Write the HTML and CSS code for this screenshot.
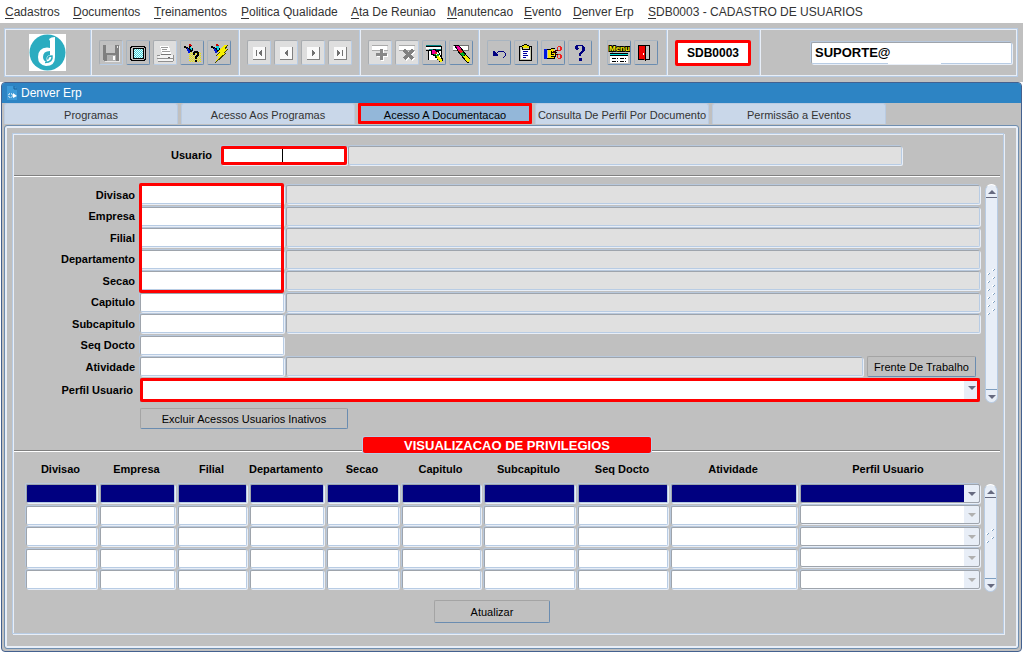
FILE: index.html
```html
<!DOCTYPE html>
<html lang="pt-BR">
<head>
  <meta charset="UTF-8">
  <meta name="viewport" content="width=device-width, initial-scale=1.0">
  <title>SDB0003 - Cadastro de Usuarios</title>
  <link rel="stylesheet" href="styles.css">
</head>
<body>
  <nav class="menu">
    <a href="#"><u>C</u>adastros</a>
    <a href="#"><u>D</u>ocumentos</a>
    <a href="#"><u>T</u>reinamentos</a>
    <a href="#"><u>P</u>olitica Qualidade</a>
    <a href="#"><u>A</u>ta De Reuniao</a>
    <a href="#"><u>M</u>anutencao</a>
    <a href="#"><u>E</u>vento</a>
    <a href="#"><u>D</u>enver Erp</a>
    <a href="#"><u>S</u>DB0003 - CADASTRO DE USUARIOS</a>
  </nav>

  <header class="toolbar">
    <div class="toolbar-frame">
      <div class="group group-logo">
        <svg class="logo" viewBox="0 0 37 37">
          <rect width="37" height="37" fill="#fff"/>
          <circle cx="18.500" cy="18.500" r="18" fill="#2bacc0"/>
          <path d="M20 5Q22 3 26 3V23Q26 32 17 32Q9 31 9 23Q9 14 18 13.500L21 14V7z" fill="#fff"/>
          <path d="M21 17Q14 17 14 23Q14 27 18 28Q16 22 21 21z" fill="#2bacc0"/>
          <path d="M16 28.500Q24 28 23 22Q18 22 19 25.500" fill="none" stroke="#2bacc0" stroke-width="1.500"/>
        </svg>
      </div>

      <div class="group">
        <button class="tool off" aria-label="Salvar">
          <svg viewBox="0 0 22 22"><path d="M3 3h16v16H4v-1H3z" fill="#808080"/><path d="M6 3h9v8H6z" fill="#c4c4c4"/><path d="M7 13h9v6H7z" fill="#b0b0b0"/><path d="M13 14h2v4h-2z" fill="#fff"/><path d="M17 4h1v2h-1zM19 4h1v16H5v-1h14z" fill="#e8e8e8"/></svg>
        </button>
        <button class="tool" aria-label="Tela">
          <svg viewBox="0 0 22 22">
            <defs><pattern id="dots" width="2" height="2" patternUnits="userSpaceOnUse"><path d="M0 0h2v2H0z" fill="#e8ffff"/><path d="M0 0h1v1H0zM1 1h1v1H1z" fill="#40d0d8"/></pattern></defs>
            <path d="M4 4h14v1h1v13h-1v1H4v-1H3V5h1z" fill="#000"/><path d="M5 5h12v1h1v11h-1v1H5v-1H4V6h1z" fill="#c0c0c0"/><path d="M6 6h11v11H6z" fill="#000"/><path d="M7 7h9v9H7z" fill="url(#dots)"/>
          </svg>
        </button>
        <button class="tool off light" aria-label="Imprimir">
          <svg viewBox="0 0 22 22"><path d="M6 4h9l2 8H8z" fill="#fff"/><path d="M7 5.500h7M8 7.500h5M8 9.500h8" stroke="#999"/><path d="M7 12.500h10" stroke="#777"/><path d="M4 13h15v6H4z" fill="#f4f4f4"/><path d="M3 13.500h3M3 16.500h16M4 19.500h15M19.500 13v6" stroke="#909090"/><path d="M14 15.500h2" stroke="#666"/></svg>
        </button>
        <button class="tool" aria-label="Consultar">
          <svg viewBox="0 0 22 22">
            <defs><pattern id="yellow" width="2" height="2" patternUnits="userSpaceOnUse"><path d="M0 0h1v1H0zM1 1h1v1H1z" fill="#f0e800"/></pattern></defs>
            <path d="M8 10h12v10H8z" fill="url(#yellow)"/>
            <path d="M3 4h2v1h2v1h1v-2h2v2h2v3h-1v1H9v1H7v-2H6V7H5V6H3z" fill="#000"/><path d="M6 6h1v1h1v1h1v3H7V9H6z" fill="#0018d8"/><path d="M9 5h1v1h1v2h-1V7H9z" fill="#08d0e0"/><path d="M8 2h2v1h1v1H8z" fill="#d00000"/>
            <path d="M13 9h4v1h1v4h-1v1h-1v2h-2v-3h1v-1h1v-2h-2v2h-2v-3h1zM14 18h2v2h-2z" fill="#000"/>
          </svg>
        </button>
        <button class="tool" aria-label="Executar consulta">
          <svg viewBox="0 0 22 22"><path d="M3 4h2v1h2v1h1V4h2v2h2v3h-1v1H9v1H7V9H6V7H5V6H3z" fill="#000"/><path d="M6 6h1v1h1v1h1v3H7V9H6z" fill="#0018d8"/><path d="M8 4h2l1 1v3H9V6H8z" fill="#08d0e0"/><path d="M8 2h2v1h1v1H8z" fill="#d00000"/><path d="M16 3h4l-3 4h3l-4 4h2L7 21l4-7H8l4-4h-2z" fill="#f8f000"/><path d="M20 3l-3 4M20 7l-4 4M18 11L7 21M8 14l4-4" fill="none" stroke="#404000"/></svg>
        </button>
      </div>

      <div class="group">
        <button class="tool off light" aria-label="Primeiro">
          <svg viewBox="0 0 22 22"><path d="M5 5h12v12H5z" fill="#fafafa"/><path d="M17.500 5v13M5 17.500h13" stroke="#808080"/><path d="M8 8h1v6H8zM14 8v6l-4-3z" fill="#707070"/></svg>
        </button>
        <button class="tool off light" aria-label="Anterior">
          <svg viewBox="0 0 22 22"><path d="M5 5h12v12H5z" fill="#fafafa"/><path d="M17.500 5v13M5 17.500h13" stroke="#808080"/><path d="M13 8v6l-4-3z" fill="#707070"/></svg>
        </button>
        <button class="tool off light" aria-label="Proximo">
          <svg viewBox="0 0 22 22"><path d="M5 5h12v12H5z" fill="#fafafa"/><path d="M17.500 5v13M5 17.500h13" stroke="#808080"/><path d="M10 8v6l4-3z" fill="#707070"/></svg>
        </button>
        <button class="tool off light" aria-label="Ultimo">
          <svg viewBox="0 0 22 22"><path d="M5 5h12v12H5z" fill="#fafafa"/><path d="M17.500 5v13M5 17.500h13" stroke="#808080"/><path d="M8 8v6l4-3zM13 8h1v6h-1z" fill="#707070"/></svg>
        </button>
      </div>

      <div class="group">
        <button class="tool off light" aria-label="Inserir">
          <svg viewBox="0 0 22 22"><path d="M3 4h15v4H3z" fill="#fff"/><path d="M3 3.500h16M3 8.500h16" stroke="#aaa"/><path d="M12 8h3v4h4v3h-4v4h-3v-4H8v-3h4z" fill="#fff"/><path d="M11 7h3v4h4v3h-4v4h-3v-4H7v-3h4z" fill="#888"/></svg>
        </button>
        <button class="tool off light" aria-label="Remover">
          <svg viewBox="0 0 22 22"><path d="M3 4h15v4H3z" fill="#fff"/><path d="M3 3.500h16M3 8.500h16" stroke="#aaa"/><path d="M9 9l9 9M18 9l-9 9" stroke="#fff" stroke-width="3"/><path d="M8 8l9 9M17 8l-9 9" stroke="#808080" stroke-width="3"/></svg>
        </button>
        <button class="tool" aria-label="Limpar tela">
          <svg viewBox="0 0 22 22"><path d="M3 4h15v1H3zM5 8h14v1H5zM5 9h1v9H5zM3 8h2v1H3z" fill="#000"/><path d="M3 3h15v1H3zM6 7h13v1H6z" fill="#008080"/><path d="M3 5h15v2H3zM6 9h13v9H6z" fill="#fff"/><path d="M18 4h1v14h-1z" fill="#000"/><path d="M9 8h3v1h2v2h-2v2h-2v-1H8V9h1z" fill="#f000a0"/><path d="M10 7h3v1h2v1h1v2h1v2h1v1h1v2h1v3h-1v-2h-1v-2h-1v-2h-1v-2h-1v-1h-2V8h-3zM8 9v4h2v1h2v2h2v2h2v2h2v-1h-1v-2h-2v-2h-2v-2h-2v-1h-2v-1H9V9z" fill="#000"/><path d="M12 10h2v2h-2z" fill="#f02020"/><path d="M11 12h2v1h1v-1h2v2h-2v1h-1v-2h-2z" fill="#00b020"/><path d="M14 14h2l2 3h1v3h-2l-3-4z" fill="#f8f000"/></svg>
        </button>
        <button class="tool" aria-label="Limpar registro">
          <svg viewBox="0 0 22 22"><path d="M3 4h15v4H3z" fill="#fff"/><path d="M3 3.500h16M3 8.500h16M18.500 4v5" stroke="#707070"/><path d="M4 3h5l11 14-1 4h-2L8 10z" fill="#000"/><path d="M6 4h3l2 3-3 1z" fill="#f000a0"/><path d="M8 8l3-1 2 3-3 1z" fill="#f02020"/><path d="M10 11l3-1 2 3-3 1z" fill="#00b020"/><path d="M13 14l3-1 4 5-1 2h-2z" fill="#f8f000"/></svg>
        </button>
      </div>

      <div class="group">
        <button class="tool" aria-label="Desfazer">
          <svg viewBox="0 0 22 22"><path d="M5 9h1l4 4v1H5z" fill="#000080"/><path d="M8 12l3-3h4l2 2v3l-2 2" fill="none" stroke="#000080"/></svg>
        </button>
        <button class="tool" aria-label="Lista">
          <svg viewBox="0 0 22 22"><path d="M4 4h3V3h2V2h3v1h2v1h3v15H4z" fill="#000"/><path d="M5 5h11v13H5z" fill="#c8c8b0"/><path d="M7 4h7v2H7zM9 3h3v1H9z" fill="#e8e000"/><path d="M6 7h9v10H6z" fill="#fff"/><path d="M7 4.500V7h7V4" fill="none" stroke="#000"/><path d="M8 9.500h5M8 11.500h4M8 13.500h5M8 15.500h3" stroke="#0000a0"/></svg>
        </button>
        <button class="tool" aria-label="Recortar">
          <svg viewBox="0 0 22 22"><path d="M2 7h3v10H2z" fill="#0018e0"/><path d="M6 7h6v2h2v2h-1v2h-1v3H6z" fill="#f8e000"/><path d="M5 7.500h3l2-1h3M5 16.500h7l1-2v-2l1-2h-4M9 12.500h3M9 14.500h3M9 9v3" fill="none" stroke="#000"/><path d="M11 10l5-2M11 10l5 3" stroke="#400000"/><path d="M16 4h3v1h1v3h-1v1h-3V8h2V5h-2zM15 5h1v3h-1zM16 12h3v1h1v3h-1v1h-3v-1h2v-3h-2zM15 13h1v3h-1z" fill="#f02020"/></svg>
        </button>
        <button class="tool" aria-label="Ajuda">
          <svg viewBox="0 0 22 22"><path d="M7 3h7v1h1v1h1v4h-1v1h-1v1h-1v1h-1v2h-2v-3h1v-1h1V9h1V4H9v2h1v1H9v1H7V7H6V4h1zM10 16h3v3h-3z" fill="#000080"/></svg>
        </button>
      </div>

      <div class="group">
        <button class="tool" aria-label="Menu">
          <svg viewBox="0 0 22 22"><text class="menu-text" x="1" y="9">Menu</text><path d="M2 11h18v10H2z" fill="#fff"/><path d="M2 11.500h18M2 13.500h18" stroke="#000"/><path d="M2 12.500h18" stroke="#00e0e0"/><path d="M4 16.500h15M4 19.500h15" stroke="#000" stroke-dasharray="4 1 1 2"/></svg>
        </button>
        <button class="tool" aria-label="Sair">
          <svg viewBox="0 0 22 22"><path d="M3 3h12v15H3z" fill="#000"/><path d="M11 4h3v13h-3z" fill="#c0c0c0"/><path d="M4 4h6v1h1v13H9v-1H4z" fill="#f00000"/><path d="M10.500 5v14" stroke="#000"/><path d="M8 11h1v2H8z" fill="#fff"/></svg>
        </button>
      </div>

      <div class="group group-code"><output class="code">SDB0003</output></div>

      <div class="group group-user">
        <input class="field login" type="text" aria-label="Usuario conectado" value="SUPORTE@">
        <span class="login-patch"></span>
      </div>
    </div>
  </header>

  <main class="window">
    <div class="titlebar">
      <svg class="title-icon" viewBox="0 0 12 15"><path d="M1 0h7l3 3v11H1z" fill="#3c9ad8"/><path d="M8 0v3h3" fill="none" stroke="#1b5e96"/><circle cx="4.500" cy="9.500" r="2" fill="none" stroke="#fff" stroke-dasharray="2 1"/><path d="M7 7l4 3-4 2z" fill="#fff"/></svg>
      <span>Denver Erp</span>
    </div>

    <div class="tabs" role="tablist">
      <button role="tab">Programas</button>
      <button role="tab">Acesso Aos Programas</button>
      <button role="tab" class="active" aria-selected="true">Acesso A Documentacao</button>
      <button role="tab">Consulta De Perfil Por Documento</button>
      <button role="tab">Permissão a Eventos</button>
    </div>

    <div class="panel">
      <div class="frame">
        <div class="user-row">
          <label for="usuario">Usuario</label>
          <div class="marked"><input class="field" type="text" id="usuario"><span class="caret"></span></div>
          <input class="field gray" type="text" aria-label="Nome do usuario" readonly>
        </div>
        <hr>

        <div class="access">
          <div class="rows">
            <div class="marked marked-rows">
              <div class="row"><label for="divisao">Divisao</label><input class="field" type="text" id="divisao"><input class="field gray" type="text" aria-label="Descricao divisao" readonly></div>
              <div class="row"><label for="empresa">Empresa</label><input class="field" type="text" id="empresa"><input class="field gray" type="text" aria-label="Descricao empresa" readonly></div>
              <div class="row"><label for="filial">Filial</label><input class="field" type="text" id="filial"><input class="field gray" type="text" aria-label="Descricao filial" readonly></div>
              <div class="row"><label for="departamento">Departamento</label><input class="field" type="text" id="departamento"><input class="field gray" type="text" aria-label="Descricao departamento" readonly></div>
              <div class="row"><label for="secao">Secao</label><input class="field" type="text" id="secao"><input class="field gray" type="text" aria-label="Descricao secao" readonly></div>
            </div>
            <div class="row"><label for="capitulo">Capitulo</label><input class="field" type="text" id="capitulo"><input class="field gray" type="text" aria-label="Descricao capitulo" readonly></div>
            <div class="row"><label for="subcapitulo">Subcapitulo</label><input class="field" type="text" id="subcapitulo"><input class="field gray" type="text" aria-label="Descricao subcapitulo" readonly></div>
            <div class="row"><label for="seq">Seq Docto</label><input class="field" type="text" id="seq"></div>
            <div class="row row-button"><label for="atividade">Atividade</label><input class="field" type="text" id="atividade"><input class="field gray" type="text" aria-label="Descricao atividade" readonly><button class="btn">Frente De Trabalho</button></div>
            <div class="row row-select"><label for="perfil">Perfil Usuario</label>
              <div class="marked combo"><select id="perfil"><option></option></select></div>
            </div>
          </div>
          <div class="scroll">
            <button class="up" aria-label="Subir"></button>
            <svg class="grip" viewBox="0 0 9 52"><use href="#grip-dots"/><use href="#grip-dots" y="16"/><use href="#grip-dots" y="32"/></svg>
            <button class="down" aria-label="Descer"></button>
          </div>
        </div>
        <button class="btn btn-delete">Excluir Acessos Usuarios Inativos</button>

        <div class="divider"><hr><h2>VISUALIZACAO DE PRIVILEGIOS</h2></div>

        <div class="list">
          <table>
            <colgroup><col class="c1"><col class="c2"><col class="c3"><col class="c4"><col class="c5"><col class="c6"><col class="c7"><col class="c8"><col class="c9"><col></colgroup>
            <thead>
              <tr><th>Divisao</th><th>Empresa</th><th>Filial</th><th>Departamento</th><th>Secao</th><th>Capitulo</th><th>Subcapitulo</th><th>Seq Docto</th><th>Atividade</th><th>Perfil Usuario</th></tr>
            </thead>
            <tbody id="privilegios"></tbody>
          </table>
          <div class="scroll scroll-list">
            <button class="up" aria-label="Subir"></button>
            <svg class="grip" viewBox="0 0 9 20">
              <defs>
                <g id="grip-dots">
                  <path d="M5 1h2v2H5zM0 5h2v2H0zM5 9h2v2H5zM0 13h2v2H0z" fill="#fff"/>
                  <path d="M7 1h1v1H7zM6 2h1v1H6zM2 5h1v1H2zM1 6h1v1H1zM7 9h1v1H7zM6 10h1v1H6zM2 13h1v1H2zM1 14h1v1H1z" fill="#7f9fc0"/>
                </g>
              </defs>
              <use href="#grip-dots"/>
            </svg>
            <button class="down" aria-label="Descer"></button>
          </div>
        </div>

        <button class="btn btn-refresh">Atualizar</button>
      </div>
    </div>
  </main>
  <script src="script.js"></script>
</body>
</html>
```

FILE: styles.css
```css
*, *::before {
  box-sizing: border-box;
}
body {
  margin: 0;
  background: #fff;
  color: #000;
  font-family: "Liberation Sans", Arial, sans-serif;
  font-size: 11px;
}
button, input, select {
  font: inherit;
  color: inherit;
  margin: 0;
  padding: 0;
  border-radius: 0;
}

/* menu */
.menu {
  display: grid;
  grid-template-columns: 68px 81px 87px 110px 96px 77px 49px 75px auto;
  height: 23px;
  padding-left: 5px;
  line-height: 24px;
  font-size: 12px;
  white-space: nowrap;
}
.menu a {
  color: #333;
  text-decoration: none;
}
.menu u {
  text-underline-offset: 2px;
}

/* toolbar */
.toolbar {
  background: #c0c0c0;
  padding: 5px 5px 5px 4px;
}
.toolbar-frame {
  display: grid;
  grid-template-columns: 84px 148px 121px 119px 120px 68px 93px 1fr;
  height: 49px;
  border: 1px solid #b8cce4;
  box-shadow: inset 1px 1px 0 #e8eef7, inset -1px -1px 0 #e8eef7;
  padding: 1px;
}
.group {
  display: flex;
  align-items: center;
  gap: 3px;
  padding-left: 8px;
  border-left: 1px solid #b8cce4;
  box-shadow: inset 1px 0 0 #e8eef7;
}
.group-logo {
  border: 0;
  box-shadow: none;
  padding-left: 23px;
}
.logo {
  width: 37px;
  height: 37px;
}
.tool {
  width: 24px;
  height: 25px;
  background: #c0c0c0;
  border: 1px solid;
  border-color: #a8b4c0 #6a8cb0 #6a8cb0 #a8b4c0;
  border-radius: 2px;
}
.tool svg {
  display: block;
  width: 22px;
  height: 22px;
  shape-rendering: crispEdges;
}
.tool.off {
  border-color: #a8acb0 #b8cce4 #b8cce4 #a8acb0;
}
.tool.light {
  background: #dedede;
}
.menu-text {
  fill: #f8f000;
  stroke: #000;
  stroke-width: 2px;
  paint-order: stroke;
  font-size: 8px;
  font-weight: bold;
}
.code {
  width: 76px;
  height: 26px;
  background: #fff;
  border: 3px solid #f00;
  border-radius: 2px;
  font-size: 12px;
  font-weight: bold;
  line-height: 20px;
  text-align: center;
}
.group-user {
  position: relative;
  padding: 0 4px 0 51px;
}
.field {
  display: block;
  width: 100%;
  min-width: 0;
  height: 19px;
  background: #fff;
  border: 1px solid;
  border-color: #9ea4ac #b8cce4 #b8cce4 #9ea4ac;
  border-radius: 2px;
  box-shadow: 1px 1px 0 #e8eef7, -1px -1px 0 #b8c8dc;
  outline: none;
}
.field.gray {
  background: #e0e0e0;
}
.field.login {
  height: 22px;
  padding-left: 3px;
  font-size: 13px;
  font-weight: bold;
}
.login-patch {
  position: absolute;
  left: 128px;
  bottom: 11px;
  width: 53px;
  height: 5px;
  background: #fff;
}

/* window */
.window {
  margin: 0 1px;
  padding: 0 2px 2px;
  background: #c0c0c0;
  border: 1px solid #44618f;
  border-radius: 4px;
}
.titlebar {
  display: flex;
  align-items: center;
  gap: 3px;
  height: 20px;
  margin: 0 -2px;
  padding-left: 4px;
  background: #2d84c4;
  border-radius: 3px 3px 0 0;
  color: #fff;
  font-size: 12px;
}
.title-icon {
  width: 12px;
  height: 15px;
}
.tabs {
  display: flex;
  gap: 3px;
  height: 22px;
}
.tabs button {
  width: 174px;
  height: 21px;
  padding-top: 2px;
  background: #c9d7e9;
  border: 1px solid #b9cbe2;
  border-bottom: 0;
  border-radius: 3px 3px 0 0;
  color: #333;
  white-space: nowrap;
}
.tabs .active {
  background: #93b7d9;
  border: 3px solid #f00;
  border-radius: 1px;
  color: #000;
}
.panel {
  padding: 7px 14px 14px 7px;
  border: 1px solid #6f8eb0;
  border-radius: 3px;
  box-shadow: inset 0 0 0 2px #e8eef7;
}
.frame {
  padding: 1px;
  border: 1px solid #b8cce4;
  box-shadow: inset 1px 1px 0 #e8eef7, 1px 1px 0 #e8eef7;
}
hr {
  margin: 0 2px 0 0;
  border: 0;
  border-top: 1px solid #808080;
  border-bottom: 1px solid #fff;
}
label, th {
  font-weight: bold;
}
label {
  text-align: right;
}
.marked {
  position: relative;
}
.marked::before {
  content: "";
  position: absolute;
  inset: 0;
  z-index: 1;
  border: 3px solid #f00;
  border-radius: 2px;
  pointer-events: none;
}
.user-row {
  display: grid;
  grid-template-columns: 198px 136px 1fr;
  align-items: center;
  height: 40px;
  padding-right: 100px;
}
.user-row .marked {
  margin: 0 1px 0 9px;
}
.caret {
  position: absolute;
  left: 61px;
  top: 3px;
  width: 1px;
  height: 13px;
  background: #000;
}

/* access form */
.access {
  display: flex;
  gap: 5px;
  padding: 7px 4px 0 0;
}
.rows {
  flex: 1;
}
.row {
  display: grid;
  grid-template-columns: 124px 144px 1fr;
  column-gap: 2px;
  align-items: center;
  height: 21px;
}
.row label {
  padding-right: 3px;
}
.row:nth-child(2n) {
  height: 22px;
}
.row-button {
  grid-template-columns: 124px 144px 1fr 111px 2px;
}
.row-button .btn {
  margin-left: 2px;
}
.row.row-select {
  grid-template-columns: 124px 1fr;
  height: 26px;
}
.row-select label {
  padding-right: 5px;
}
.marked-rows::before {
  inset: -1px auto -2px 125px;
  width: 145px;
}
.combo {
  height: 24px;
}
.combo select {
  display: block;
  width: 100%;
  height: 100%;
  appearance: none;
  background: linear-gradient(#e8eef7, #e8eef7) right / 15px 100% no-repeat #fff;
  border: 1px solid #9ea4ac;
  outline: none;
}
.combo::after {
  content: "";
  position: absolute;
  right: 4px;
  top: 8px;
  border: 4px solid transparent;
  border-top-color: #666a80;
  border-bottom: 0;
  pointer-events: none;
}
.btn {
  height: 21px;
  background: #c0c0c0;
  border: 1px solid;
  border-color: #a4a4a4 #6a8cb0 #6a8cb0 #a4a4a4;
  border-radius: 2px;
}
.btn-delete {
  display: block;
  width: 208px;
  margin: 5px 0 0 126px;
}
.scroll {
  display: flex;
  flex-direction: column;
  align-items: center;
  justify-content: space-between;
  width: 13px;
  background: #e8eef7;
  border: 1px solid #b8cce4;
  border-top-color: #fff;
  border-radius: 7px;
}
.scroll button {
  position: relative;
  width: 11px;
  height: 13px;
  background: none;
  border: 0;
}
.scroll .up {
  border-bottom: 1px solid #666a80;
}
.scroll .down {
  border-top: 1px solid #7f9fc0;
}
.scroll button::before {
  content: "";
  position: absolute;
  left: 2px;
  top: 5px;
  border: 4px solid transparent;
}
.scroll .up::before {
  border-bottom-color: #666a80;
  border-top: 0;
}
.scroll .down::before {
  border-top-color: #666a80;
  border-bottom: 0;
}
.grip {
  width: 9px;
  height: 52px;
  shape-rendering: crispEdges;
}

/* privileges */
.divider {
  position: relative;
  margin-top: 8px;
  padding-top: 13px;
}
.divider h2 {
  position: absolute;
  left: 50%;
  top: 0;
  width: 288px;
  height: 16px;
  margin: 0 0 0 -145px;
  background: #f00;
  border-radius: 2px;
  box-shadow: 0 0 0 1px #b8cce4;
  color: #fff;
  font-size: 13px;
  line-height: 17px;
  text-align: center;
}
.list {
  display: flex;
  align-items: flex-end;
  gap: 4px;
  padding: 0 5px 0 11px;
}
table {
  flex: 1;
  width: 100%;
  table-layout: fixed;
  border-collapse: collapse;
}
.c1 { width: 74px; }
.c2 { width: 78px; }
.c3 { width: 72px; }
.c4 { width: 77px; }
.c5 { width: 75px; }
.c6 { width: 82px; }
.c7 { width: 94px; }
.c8 { width: 93px; }
.c9 { width: 129px; }
th {
  height: 31px;
  padding: 2px 3px 0 0;
  white-space: nowrap;
}
td {
  height: 21px;
  padding: 1px 2px 1px 1px;
}
tr:nth-child(2n) td {
  height: 22px;
}
td:last-child {
  padding: 0 0 1px 1px;
}
td .combo {
  position: relative;
  height: 19px;
}
td .combo select {
  border-radius: 2px;
  box-shadow: 1px 1px 0 #e8eef7, -1px -1px 0 #b8c8dc;
}
td .combo::after {
  border-top-color: #b0b0b0;
}
.current .field {
  background: #000080;
}
.current .combo select {
  background-color: #000080;
}
.current .combo::after {
  border-top-color: #666a80;
}
.scroll-list {
  height: 108px;
  margin-bottom: -2px;
}
.scroll-list .grip {
  height: 20px;
}
.btn-refresh {
  display: block;
  width: 116px;
  height: 23px;
  margin: 10px auto 9px 420px;
}
```

FILE: script.js
```js
var colunas = ['Divisao', 'Empresa', 'Filial', 'Departamento', 'Secao', 'Capitulo', 'Subcapitulo', 'Seq Docto', 'Atividade'];
var corpo = document.getElementById('privilegios');

for (var i = 0; i < 5; i++) {
  var html = '';
  colunas.forEach(function (nome) {
    html += '<td><input class="field" type="text" aria-label="' + nome + '"></td>';
  });
  html += '<td><div class="combo"><select aria-label="Perfil Usuario"><option></option></select></div></td>';
  var linha = document.createElement('tr');
  if (i === 0) linha.className = 'current';
  linha.innerHTML = html;
  corpo.appendChild(linha);
}
```
